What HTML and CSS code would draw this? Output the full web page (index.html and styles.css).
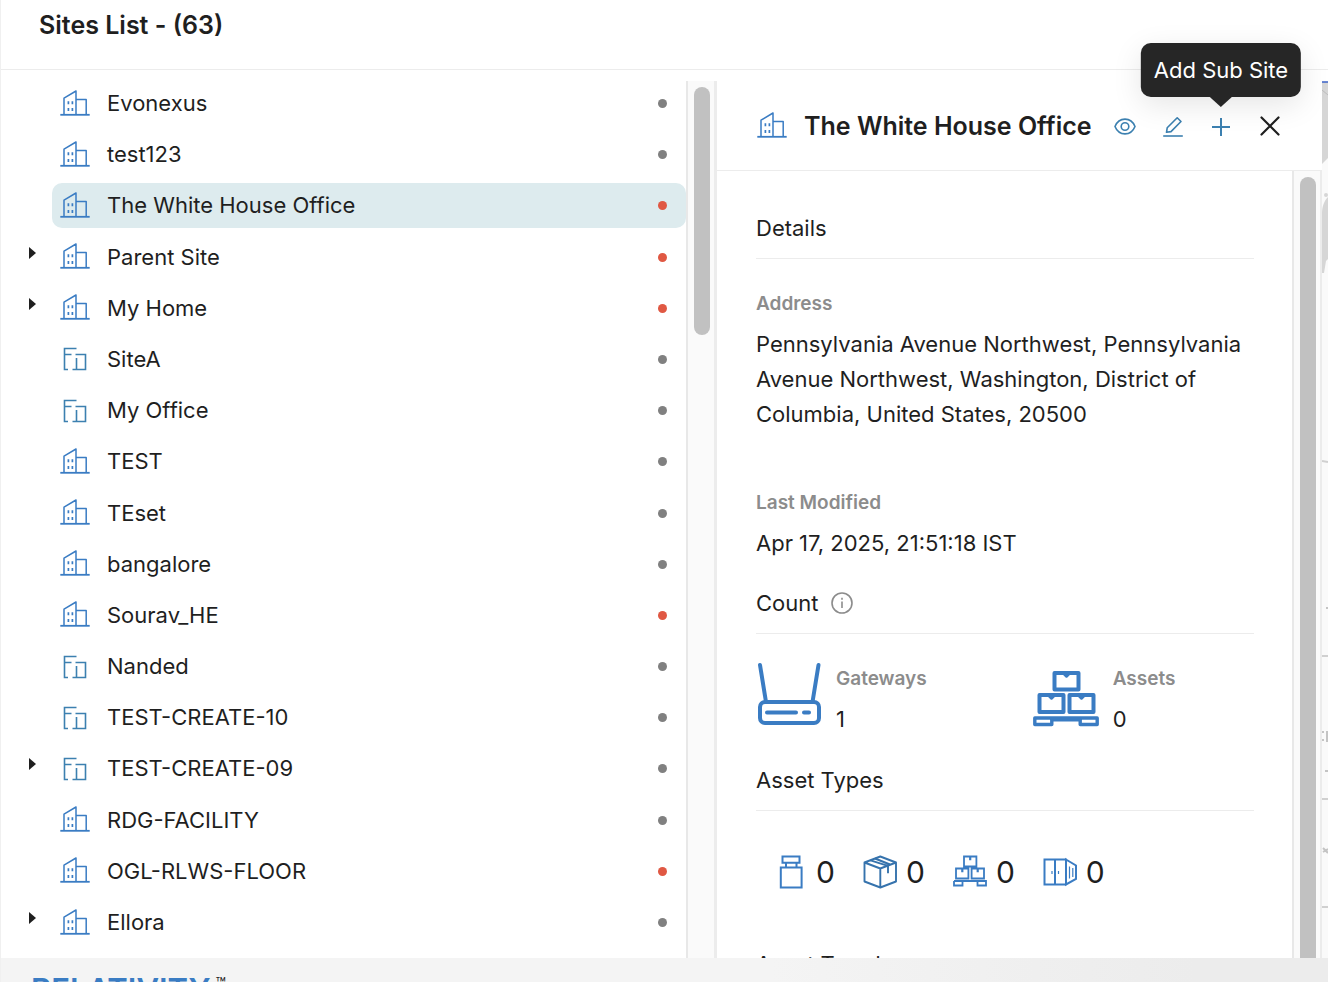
FILE: index.html
```html
<!DOCTYPE html>
<html lang="en">
<head>
    <meta charset="UTF-8">
    <meta name="viewport" content="width=device-width, initial-scale=1.0">
    <title>Sites List</title>
    <link rel="stylesheet" href="styles.css">
</head>
<body>

<svg class="sprite" aria-hidden="true">
    <symbol id="icon-building" viewBox="0 0 30 28">
        <g fill="none" stroke="#3a7cc3" stroke-width="1.5">
            <path d="M4 24.5V8.2L16 1v23.5M16 9.5h10.2v15" stroke-linejoin="round"/>
            <path d="M0.3 24.8h29.4" stroke-width="1.8"/>
            <path d="M8.4 11.3v3M12.4 11.3v3M8.4 18v3M12.4 18v3" stroke-width="1.7"/>
        </g>
    </symbol>
    <symbol id="icon-floor" viewBox="0 0 30 28">
        <path d="M16.5 3.5H4.5v21H8M4.5 9.5h7M15.5 9.5h10v15H12.5M16.500 13v11.500" fill="none" stroke="#3c80b0" stroke-width="1.600"/>
    </symbol>
    <symbol id="icon-pallet" viewBox="0 0 34 34">
        <g fill="none" stroke="#3a7cc3" stroke-width="1.8">
            <path d="M11 1.500h12.400v10H11zM3 13.500h12.400v10H3zM18.600 13.500H31v10H18.600z"/>
            <path d="M17.200 2v3.200M9.300 14v3.200M24.700 14v3.200" stroke-width="2.200"/>
            <path d="M1 26h32v4.500h-8.500V26M9.500 26v4.500H1V26"/>
        </g>
    </symbol>
</svg>

<header class="page-header">
    <h1>Sites List - (63)</h1>
</header>

<main class="content">
    <section class="sites">
        <ul class="site-list" id="siteList"></ul>
        <div class="scrollbar list-scrollbar"><div class="thumb thumb-short"></div></div>
    </section>

    <section class="drawer">
        <div class="drawer-header">
            <svg class="site-icon"><use href="#icon-building"/></svg>
            <h2>The White House Office</h2>
            <div class="actions">
                <button type="button" aria-label="View">
                    <svg viewBox="0 0 24 24" fill="none" stroke="#3c80b0" stroke-width="1.6">
                        <path d="M2 12.500C4 7.500 7.600 5.100 12 5.100S20 7.500 22 12.500C20 17.500 16.400 19.900 12 19.900S4 17.500 2 12.500z"/>
                        <circle cx="12" cy="12.500" r="3.800"/>
                    </svg>
                </button>
                <button type="button" aria-label="Edit">
                    <svg viewBox="0 0 24 24" fill="none" stroke="#3c80b0" stroke-width="1.6" stroke-linejoin="round">
                        <path d="M5.500 18.300l.7-4.500L16.200 3.800l3.800 3.700L10 17.600z"/>
                        <path d="M2.200 22h19.600"/>
                    </svg>
                </button>
                <button type="button" aria-label="Add Sub Site" aria-describedby="addTip">
                    <svg viewBox="0 0 24 24" fill="none" stroke="#3c80b0" stroke-width="2">
                        <path d="M12 4v18M3 13h18"/>
                    </svg>
                    <span class="tooltip" id="addTip" role="tooltip">Add Sub Site</span>
                </button>
                <button type="button" aria-label="Close">
                    <svg viewBox="0 0 24 24" fill="none" stroke="#1f1f1f" stroke-width="2.2" stroke-linecap="round">
                        <path d="M4.500 3.500l17 17M21.500 3.500l-17 17"/>
                    </svg>
                </button>
            </div>
        </div>

        <div class="drawer-main">
            <div class="drawer-body">
                <h3>Details</h3>
                <dl class="details">
                    <dt>Address</dt>
                    <dd>Pennsylvania Avenue Northwest, Pennsylvania Avenue Northwest, Washington, District of Columbia, United States, 20500</dd>
                    <dt class="modified">Last Modified</dt>
                    <dd>Apr 17, 2025, 21:51:18 IST</dd>
                </dl>

                <h3>Count
                    <svg class="info" viewBox="0 0 24 24" fill="none" stroke="#8c8c8c" stroke-width="1.6">
                        <circle cx="12" cy="12" r="10"/>
                        <path d="M12 10.500v6.500M12 6.800v2"/>
                    </svg>
                </h3>
                <div class="counts">
                    <div class="count">
                        <svg viewBox="0 0 66 66" fill="none" stroke="#3a7cc3" stroke-width="4" stroke-linecap="round">
                            <path d="M4 3l6 37M62.500 3l-6 37"/>
                            <rect x="4" y="40" width="59" height="21" rx="5"/>
                            <path d="M11 50.500h29M48 50.500h5"/>
                        </svg>
                        <dl>
                            <dt>Gateways</dt>
                            <dd>1</dd>
                        </dl>
                    </div>
                    <div class="count">
                        <svg viewBox="0 0 66 66" fill="none" stroke="#3a7cc3" stroke-width="4" stroke-linejoin="round">
                            <path d="M21.500 11h24v16.500h-24zM6.500 33h24v17h-24zM36.500 33h24v17h-24z"/>
                            <path d="M31 12h5l-2.500 2.500zM16 34h5l-2.500 2.500zM46 34h5l-2.500 2.500z" stroke-width="2.500" fill="#3a7cc3"/>
                            <path d="M1.800 56h62.400v6.500h-17v-4.800H18.800v4.800h-17z" stroke-width="3.400"/>
                        </svg>
                        <dl>
                            <dt>Assets</dt>
                            <dd>0</dd>
                        </dl>
                    </div>
                </div>

                <h3>Asset Types</h3>
                <ul class="types">
                    <li>
                        <svg viewBox="0 0 34 34" fill="none" stroke="#3a7cc3" stroke-width="2">
                            <path d="M9.500 1.500h17v6.300h-17zM13 8v4.500M23.500 8v4.500M7.800 12.500h20.800v20H7.800z"/>
                        </svg>0
                    </li>
                    <li>
                        <svg viewBox="0 0 34 34" fill="none" stroke="#3673ad" stroke-width="1.9" stroke-linejoin="round">
                            <path d="M17.300 1.500L33 7.500v19L17.300 32.500 1.500 26.500v-19zM1.500 7.500l15.800 6 15.700-6M17.300 13.500v19"/>
                            <path d="M7.500 5.300l17.500 5.500v7.500M12 3.500l15 6"/>
                        </svg>0
                    </li>
                    <li>
                        <svg><use href="#icon-pallet"/></svg>0
                    </li>
                    <li>
                        <svg viewBox="0 0 34 34" fill="none" stroke="#3a7cc3" stroke-width="2">
                            <path d="M1.500 4.500h21.500v25H1.500zM12 4.500v25M23 4.500l10 6v13.500l-10 5.500z"/>
                            <path d="M9 16v3M15.500 16v3M26.500 11.500v12M29.800 13v9" stroke-width="1.200"/>
                        </svg>0
                    </li>
                </ul>

                <h3>Asset Trends</h3>
            </div>
            <div class="scrollbar"><div class="thumb"></div></div>
        </div>
    </section>

    <aside class="map">
        <svg viewBox="0 0 6 877" preserveAspectRatio="xMinYMin slice">
            <path d="M0 1h6v76L0 83z" fill="#d6d6d6"/>
            <path d="M0 1h6" stroke="#3c63c8" stroke-width="1.5"/>
            <path d="M0 9l6 5" stroke="#bdbdbd"/>
            <circle cx="4" cy="114" r="2" fill="#d6d6d6"/>
            <path d="M6 116C2 120 0 126 0 132v60h2l2-12 2-2z" fill="#d6d6d6"/>
            <path d="M0 380l6 1M0 575h6M0 718h6M0 826h6" stroke="#d0d0d0" stroke-width="2"/>
            <path d="M4 527h2M0 651h2M0 659h2M5 650v11M3 690h3M1 767l5 5M1 771l5-3" stroke="#c4c4c4" stroke-width="2"/>
        </svg>
    </aside>
</main>

<footer class="page-footer">
    <span class="brand">RELATIVITY</span><span class="tm">™</span>
</footer>

<script>
    var sites = [
        { name: 'Evonexus', icon: 'building' },
        { name: 'test123', icon: 'building' },
        { name: 'The White House Office', icon: 'building', alert: true, selected: true },
        { name: 'Parent Site', icon: 'building', alert: true, children: true },
        { name: 'My Home', icon: 'building', alert: true, children: true },
        { name: 'SiteA', icon: 'floor' },
        { name: 'My Office', icon: 'floor' },
        { name: 'TEST', icon: 'building' },
        { name: 'TEset', icon: 'building' },
        { name: 'bangalore', icon: 'building' },
        { name: 'Sourav_HE', icon: 'building', alert: true },
        { name: 'Nanded', icon: 'floor' },
        { name: 'TEST-CREATE-10', icon: 'floor' },
        { name: 'TEST-CREATE-09', icon: 'floor', children: true },
        { name: 'RDG-FACILITY', icon: 'building' },
        { name: 'OGL-RLWS-FLOOR', icon: 'building', alert: true },
        { name: 'Ellora', icon: 'building', children: true }
    ];

    document.getElementById('siteList').innerHTML = sites.map(function(site) {
        var toggle = site.children
            ? '<button type="button" class="toggle" aria-label="Expand ' + site.name + '"></button>'
            : '';
        return '<li>' + toggle +
            '<button type="button" class="site' + (site.selected ? ' selected' : '') + '">' +
            '<svg class="site-icon"><use href="#icon-' + site.icon + '"/></svg>' +
            '<span class="name">' + site.name + '</span>' +
            '<span class="dot' + (site.alert ? ' alert' : '') + '"></span>' +
            '</button></li>';
    }).join('');
</script>

</body>
</html>
```
FILE: styles.css
```css
* {
    box-sizing: border-box;
}

body {
    display: flex;
    flex-direction: column;
    height: 100vh;
    margin: 0;
    overflow: hidden;
    border-left: 1px solid #f0f0f0;
    font-family: Inter, sans-serif;
    font-size: 22px;
    color: #1f1f1f;
    background: #fff;
}

h1, h2, h3, ul, dl, dd {
    margin: 0;
    padding: 0;
    list-style: none;
}

button {
    padding: 0;
    border: 0;
    background: none;
    font: inherit;
    color: inherit;
    cursor: pointer;
}

svg {
    display: block;
    flex-shrink: 0;
}

.sprite {
    position: absolute;
    width: 0;
    height: 0;
}

.page-header {
    padding: 10px 38px 29px;
    border-bottom: 1px solid #ececec;
}

h1, h2 {
    font-size: 25px;
    font-weight: 600;
    line-height: 30px;
}

.content {
    display: grid;
    grid-template-columns: 1fr 605px 6px;
    flex: 1;
    min-height: 0;
    padding-top: 11px;
}

/* Sites tree */
.sites {
    display: flex;
    min-height: 0;
}

.site-list {
    display: flex;
    flex: 1;
    flex-direction: column;
    justify-content: space-between;
    padding-bottom: 13px;
}

.site-list li {
    display: flex;
    justify-content: flex-end;
    padding-left: 28px;
}

.site {
    display: flex;
    align-items: center;
    flex: 1;
    height: 45px;
    margin-left: 23px;
    padding: 0 19px 0 8px;
    border-radius: 10px;
    text-align: left;
}

.toggle + .site {
    margin-left: 0;
}

.selected {
    background: #ddebee;
}

.site-icon {
    width: 30px;
    height: 28px;
    margin-right: 17px;
}

.name {
    flex: 1;
    padding-bottom: 1px;
}

.dot {
    width: 9px;
    height: 9px;
    border-radius: 50%;
    background: #808080;
}

.alert {
    background: #e05843;
}

.toggle {
    width: 23px;
    height: 36px;
}

.toggle::before {
    content: "";
    display: block;
    width: 0;
    border-top: 6px solid transparent;
    border-bottom: 6px solid transparent;
    border-left: 7px solid #1f1f1f;
}

.scrollbar {
    width: 30px;
    padding: 6px 4px 0 6px;
    border-left: 2px solid #e8e8e8;
    border-right: 2px solid #ececec;
    background: #fafafa;
}

.list-scrollbar {
    width: 31px;
    border-right-width: 3px;
}

.thumb {
    width: 16px;
    height: 100%;
    border-radius: 8px 8px 0 0;
    background: #c1c1c1;
}

.thumb-short {
    height: 248px;
    border-radius: 8px;
}

/* Site drawer */
.drawer {
    display: flex;
    flex-direction: column;
    min-height: 0;
}

.drawer-header {
    display: flex;
    align-items: center;
    height: 90px;
    padding: 0 41px 0 40px;
    border-bottom: 1px solid #ececec;
}

.actions {
    display: flex;
    gap: 24px;
    margin-left: auto;
}

.actions button {
    position: relative;
    width: 24px;
    height: 24px;
}

.tooltip {
    position: absolute;
    bottom: calc(100% + 17px);
    left: 50%;
    transform: translateX(-50%);
    padding: 12px 13px;
    border-radius: 10px;
    background: #262626;
    box-shadow: 0 8px 30px rgba(0, 0, 0, 0.1);
    color: #fff;
    line-height: 30px;
    white-space: nowrap;
}

.tooltip::after {
    content: "";
    position: absolute;
    top: 100%;
    left: 50%;
    margin-left: -11px;
    border-top: 10px solid #262626;
    border-left: 11px solid transparent;
    border-right: 11px solid transparent;
}

.drawer-main {
    display: flex;
    flex: 1;
    min-height: 0;
}

.drawer-body {
    flex: 1;
    padding: 42px 38px 0 39px;
    overflow: hidden;
}

h3 {
    display: flex;
    align-items: center;
    padding-bottom: 15px;
    border-bottom: 1px solid #ececec;
    font-size: 22px;
    font-weight: 400;
    line-height: 30px;
}

.info {
    width: 24px;
    height: 24px;
    margin-left: 12px;
}

dt {
    margin-bottom: 8px;
    color: #8c8c8c;
    font-size: 19px;
    font-weight: 600;
    line-height: 30px;
}

dd {
    line-height: 35px;
}

.details {
    margin: 30px 0 27px;
}

.modified {
    margin-top: 56px;
}

.counts {
    display: grid;
    grid-template-columns: 5fr 4fr;
    margin: 30px 0 28px;
}

.count {
    display: flex;
    gap: 14px;
}

.count svg {
    width: 66px;
    height: 66px;
    margin-top: -2px;
}

.types {
    display: flex;
    gap: 28px;
    margin: 44px 0 60px 17px;
}

.types li {
    display: flex;
    align-items: center;
    gap: 9px;
    font-size: 30px;
    line-height: 30px;
}

.types svg {
    width: 34px;
    height: 34px;
}

.map {
    overflow: hidden;
    background: #fafafa;
}

.map svg {
    width: 100%;
    height: 100%;
}

/* Footer */
.page-footer {
    display: flex;
    align-items: flex-start;
    height: 24px;
    padding: 17px 30px 0;
    overflow: hidden;
    background: linear-gradient(to right, #f4f4f4 58%, #ececec 90%);
}

.brand {
    color: #3a7cc3;
    font-size: 31px;
    font-weight: 600;
    line-height: 30px;
}

.tm {
    margin-left: 5px;
    font-size: 17px;
    line-height: 18px;
}
```
